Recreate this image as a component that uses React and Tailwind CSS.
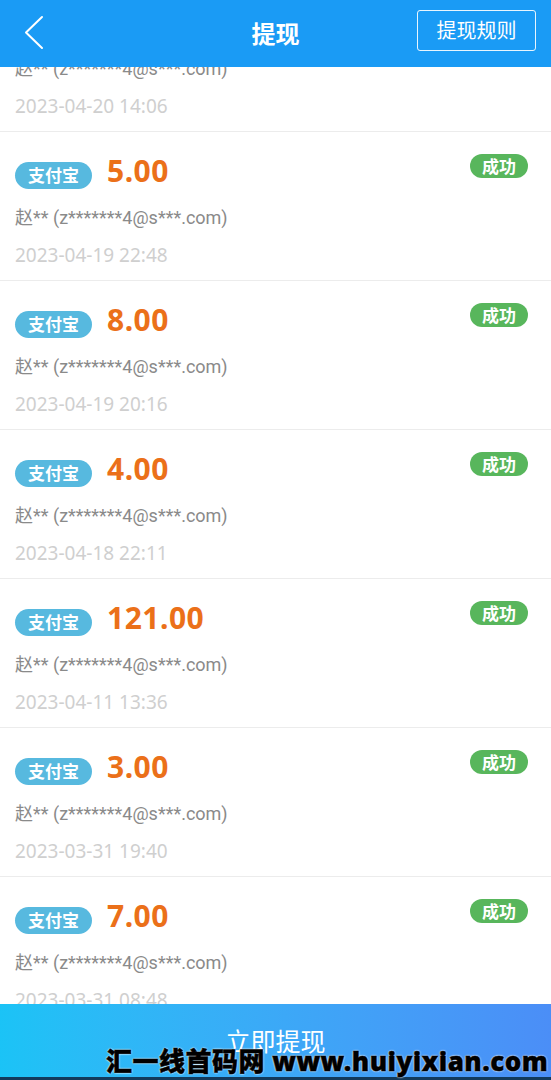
const records = [
  { amount: '0.00', date: '2023-04-20 14:06' },
  { amount: '5.00', date: '2023-04-19 22:48' },
  { amount: '8.00', date: '2023-04-19 20:16' },
  { amount: '4.00', date: '2023-04-18 22:11' },
  { amount: '121.00', date: '2023-04-11 13:36' },
  { amount: '3.00', date: '2023-03-31 19:40' },
  { amount: '7.00', date: '2023-03-31 08:48' },
]

const font = { fontFamily: '"Noto Sans", "Noto Sans CJK SC", sans-serif' }
const roboto = { fontFamily: 'Roboto, "Noto Sans CJK SC", sans-serif' }

function Record({ item, first }) {
  return (
    <div className={`h-[149px] shrink-0 border-b border-[#ececec] px-[15px] pt-[28px] relative ${first ? '-mt-[84px]' : ''}`}>
      <div className="flex items-center h-[30px]">
        <span className="h-[27px] w-[77px] rounded-full bg-[#57b9df] text-white text-[17px] font-bold flex items-center justify-center leading-none">
          支付宝
        </span>
        <span className="ml-[15px] -translate-y-[4px] text-[30px] font-bold text-[#eb7019] leading-none tracking-[0.5px]">
          {item.amount}
        </span>
      </div>
      <span className="absolute right-[23px] top-[22px] h-[24px] w-[58px] rounded-full bg-[#58b65c] text-white text-[17px] font-bold flex items-center justify-center leading-none">
        成功
      </span>
      <div className="mt-[16px] text-[18px] text-[#8a8a8a] leading-[24px]" style={roboto}>赵** (z*******4@s***.com)</div>
      <div className="mt-[13px] text-[19px] text-[#cfcfcf] leading-[24px]">{item.date}</div>
    </div>
  )
}

export default function App() {
  return (
    <div className="w-[551px] h-[1080px] flex flex-col bg-white relative overflow-hidden" style={font}>
      {/* header */}
      <div className="h-[67px] shrink-0 bg-[#1a9bf5] flex items-center relative z-10">
        <svg className="absolute left-[22px] top-[14px]" width="24" height="38" viewBox="0 0 24 38" fill="none">
          <polyline points="20,3 4,18.5 20,34" stroke="white" strokeWidth="2" strokeLinecap="round" strokeLinejoin="round" />
        </svg>
        <div className="flex-1 text-center text-white text-[24px] font-bold">提现</div>
        <button className="absolute right-[15px] top-[10px] w-[119px] h-[41px] border border-white/90 rounded-[3px] text-white text-[20px] flex items-center justify-center">
          提现规则
        </button>
      </div>

      {/* list */}
      <div className="flex-1 flex flex-col overflow-hidden">
        {records.map((item, i) => (
          <Record key={i} item={item} first={i === 0} />
        ))}
      </div>

      {/* submit */}
      <button className="h-[76px] shrink-0 bg-gradient-to-r from-[#1bc3f6] to-[#4b8ef7] text-white text-[25px] flex items-center justify-center pt-[3px] border-b-[3px] border-[#123a5c]">
        立即提现
      </button>

      {/* watermark */}
      <div
        className="absolute left-[106px] bottom-[6px] text-[26px] font-black text-black leading-none whitespace-nowrap tracking-[0.5px]"
        style={{ WebkitTextStroke: '0.5px #000', textShadow: '0 0 2px #fff, 0 0 2px #fff' }}
      >
        汇一线首码网 www.huiyixian.com
      </div>
    </div>
  )
}
